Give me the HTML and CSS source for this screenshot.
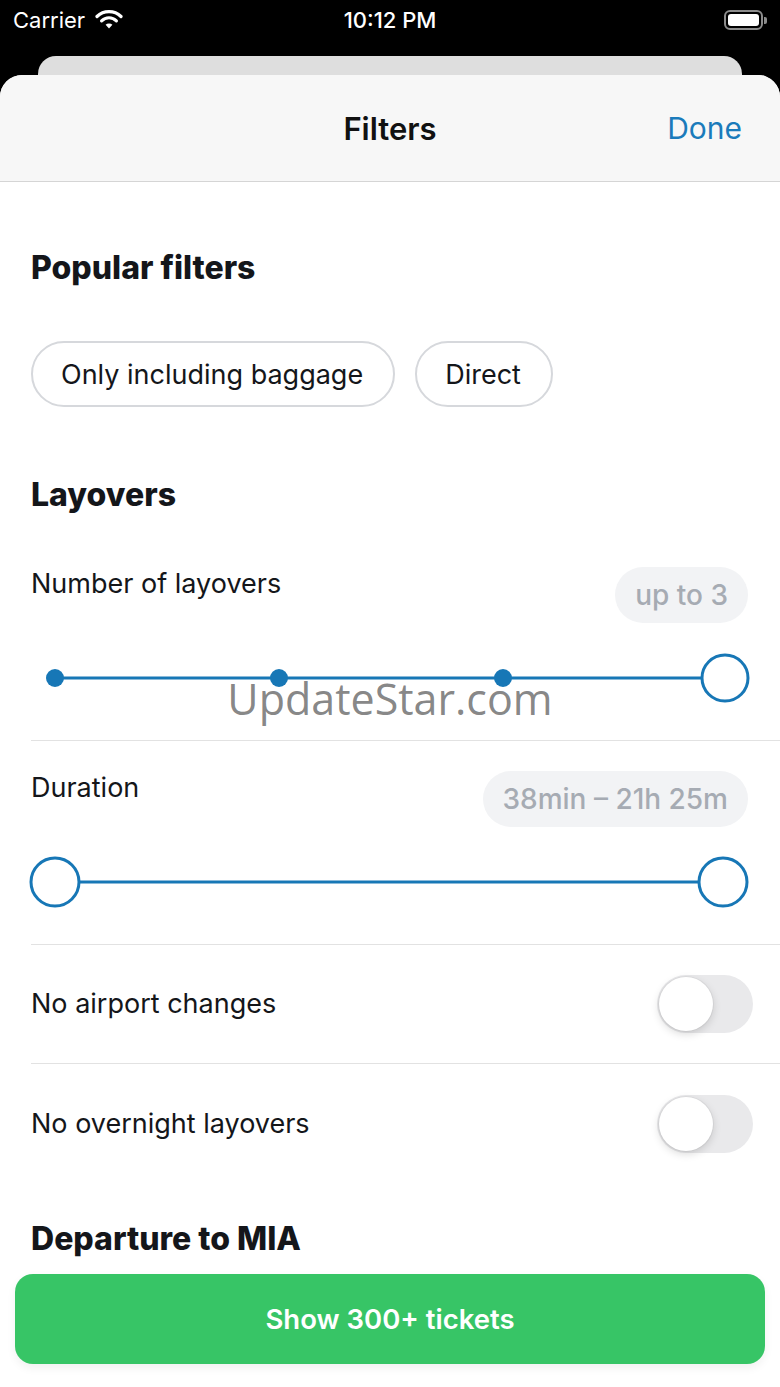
FILE: index.html
```html
<!DOCTYPE html>
<html lang="en">
<head>
    <meta charset="UTF-8">
    <meta name="viewport" content="width=device-width, initial-scale=1.0">
    <title>Filters</title>
    <link rel="stylesheet" href="styles.css">
</head>
<body>
    <div class="phone">
        <div class="status">
            <div class="status-left">
                <span>Carrier</span>
                <svg class="wifi" width="28" height="20" viewBox="0 0 28 20">
                    <path d="M2 7.5 A17 17 0 0 1 26 7.5" fill="none" stroke="#fff" stroke-width="3.2" stroke-linecap="round"/>
                    <path d="M6.6 11.8 A10.5 10.5 0 0 1 21.4 11.8" fill="none" stroke="#fff" stroke-width="3.2" stroke-linecap="round"/>
                    <path d="M14 19.5 L10.6 15.8 A4.8 4.8 0 0 1 17.4 15.8 Z" fill="#fff"/>
                </svg>
            </div>
            <span class="clock">10:12 PM</span>
            <div class="battery">
                <span class="battery-body"><span class="battery-fill"></span></span>
                <span class="battery-nub"></span>
            </div>
        </div>
        <div class="peek"></div>

        <div class="sheet">
            <header class="sheet-head">
                <span></span>
                <span class="title">Filters</span>
                <span class="done">Done</span>
            </header>

            <div class="content">
                <h2 class="section-title first">Popular filters</h2>
                <div class="chips">
                    <span class="chip">Only including baggage</span>
                    <span class="chip">Direct</span>
                </div>

                <h2 class="section-title layovers">Layovers</h2>

                <div class="range-item top">
                    <div class="range-head">
                        <span class="label">Number of layovers</span>
                        <span class="badge">up to 3</span>
                    </div>
                    <svg class="slider" viewBox="0 0 717 110" width="717" height="110">
                        <line x1="24" y1="55" x2="671" y2="55" stroke="#1777b6" stroke-width="3"/>
                        <circle cx="24" cy="55" r="9" fill="#1777b6"/>
                        <circle cx="248" cy="55" r="9" fill="#1777b6"/>
                        <circle cx="472" cy="55" r="9" fill="#1777b6"/>
                        <circle cx="694" cy="55" r="23" fill="#fff" stroke="#1777b6" stroke-width="3"/>
                    </svg>
                </div>

                <div class="range-item">
                    <div class="range-head">
                        <span class="label">Duration</span>
                        <span class="badge">38min – 21h 25m</span>
                    </div>
                    <svg class="slider" viewBox="0 0 717 110" width="717" height="110">
                        <line x1="48" y1="55" x2="668" y2="55" stroke="#1777b6" stroke-width="3"/>
                        <circle cx="24" cy="55" r="24" fill="#fff" stroke="#1777b6" stroke-width="3"/>
                        <circle cx="692" cy="55" r="24" fill="#fff" stroke="#1777b6" stroke-width="3"/>
                    </svg>
                </div>

                <div class="toggle-row">
                    <span class="label">No airport changes</span>
                    <span class="switch"></span>
                </div>
                <div class="toggle-row last">
                    <span class="label">No overnight layovers</span>
                    <span class="switch"></span>
                </div>

                <h2 class="section-title departure">Departure to MIA</h2>
            </div>

            <div class="watermark">UpdateStar.com</div>

            <div class="footer">
                <button class="show-btn">Show 300+ tickets</button>
            </div>
        </div>
    </div>
</body>
</html>
```

FILE: styles.css
```css
* {
    box-sizing: border-box;
    font-family: Inter, "Noto Sans", sans-serif;
}

html, body {
    margin: 0;
    background-color: #000;
}

.phone {
    width: 780px;
    height: 1387px;
    overflow: hidden;
    display: flex;
    flex-direction: column;
}

/* Status bar */
.status {
    height: 56px;
    display: grid;
    grid-template-columns: 1fr auto 1fr;
    align-items: start;
    padding: 5px 13px 0 13px;
    color: #fff;
}

.status-left {
    display: flex;
    align-items: center;
    gap: 10px;
    font-size: 22px;
    line-height: 30px;
}

.wifi {
    margin-top: -2px;
}

.clock {
    font-size: 22px;
    font-weight: 500;
    line-height: 30px;
}

.battery {
    justify-self: end;
    display: flex;
    align-items: center;
    margin-top: 5px;
}

.battery-body {
    width: 39px;
    height: 20px;
    border: 2px solid #8c8c8c;
    border-radius: 6px;
    padding: 2px;
    display: flex;
}

.battery-fill {
    flex: 1;
    background: #fff;
    border-radius: 3px;
}

.battery-nub {
    width: 3px;
    height: 7px;
    margin-left: 1px;
    background: #8c8c8c;
    border-radius: 0 2px 2px 0;
}

.peek {
    height: 19px;
    margin: 0 38px;
    background: #dedede;
    border-radius: 18px 18px 0 0;
}

/* Sheet */
.sheet {
    position: relative;
    flex: 1;
    background: #fff;
    border-radius: 22px 22px 0 0;
    overflow: hidden;
}

.sheet-head {
    height: 107px;
    display: grid;
    grid-template-columns: 1fr auto 1fr;
    align-items: center;
    padding: 0 38px;
    background: #f7f7f7;
    border-bottom: 1px solid #d5d5d5;
}

.title {
    font-size: 31px;
    font-weight: 600;
    color: #111;
}

.done {
    justify-self: end;
    font-size: 30px;
    color: #1b7bbb;
}

.content {
    padding-left: 31px;
}

.section-title {
    margin: 0;
    font-size: 32px;
    line-height: 36px;
    font-weight: 800;
    color: #14161a;
}

.section-title.first {
    padding-top: 68px;
}

.section-title.layovers {
    margin-top: 70px;
}

.section-title.departure {
    margin-top: 38px;
}

.chips {
    display: flex;
    gap: 20px;
    margin-top: 55px;
}

.chip {
    height: 66px;
    display: flex;
    align-items: center;
    padding: 0 30px 0 28px;
    border: 2px solid #d6d8dc;
    border-radius: 33px;
    font-size: 27px;
    color: #14161a;
}

.label {
    font-size: 27px;
    line-height: 34px;
    color: #14161a;
}

.range-item {
    padding: 30px 32px 7px 0;
    border-bottom: 1px solid #e2e2e2;
}

.range-item.top {
    padding-top: 54px;
}

.range-head {
    display: flex;
    justify-content: space-between;
    align-items: flex-start;
}

.badge {
    height: 56px;
    display: flex;
    align-items: center;
    padding: 0 20px;
    background: #f2f3f5;
    border-radius: 28px;
    font-size: 28px;
    font-weight: 500;
    color: #a6abb3;
}

.slider {
    display: block;
    overflow: visible;
}

.toggle-row {
    height: 119px;
    display: flex;
    justify-content: space-between;
    align-items: center;
    padding-right: 27px;
    border-bottom: 1px solid #e2e2e2;
}

.toggle-row.last {
    border-bottom: none;
}

.switch {
    position: relative;
    width: 96px;
    height: 58px;
    border-radius: 29px;
    background: #e9e9eb;
}

.switch:before {
    position: absolute;
    content: "";
    left: 2px;
    top: 2px;
    width: 54px;
    height: 54px;
    border-radius: 50%;
    background: #fff;
    box-shadow: 0 3px 8px rgba(0, 0, 0, 0.15), 0 0 0 1px rgba(0, 0, 0, 0.04);
}

/* Watermark sits over the slider */
.watermark {
    position: absolute;
    top: 594px;
    left: 0;
    right: 0;
    text-align: center;
    font-family: "Open Sans", sans-serif;
    font-size: 43px;
    color: rgba(120, 120, 120, 0.9);
    pointer-events: none;
}

/* Bottom action */
.footer {
    position: absolute;
    left: 0;
    right: 0;
    bottom: 0;
    padding: 14px 15px 23px;
    background: linear-gradient(to bottom, rgba(255, 255, 255, 0), #fff 50%);
}

.show-btn {
    width: 100%;
    height: 90px;
    border: none;
    border-radius: 18px;
    background: #37c566;
    color: #fff;
    font-size: 27.5px;
    font-weight: 600;
    box-shadow: 0 4px 10px rgba(0, 0, 0, 0.06);
}
```
